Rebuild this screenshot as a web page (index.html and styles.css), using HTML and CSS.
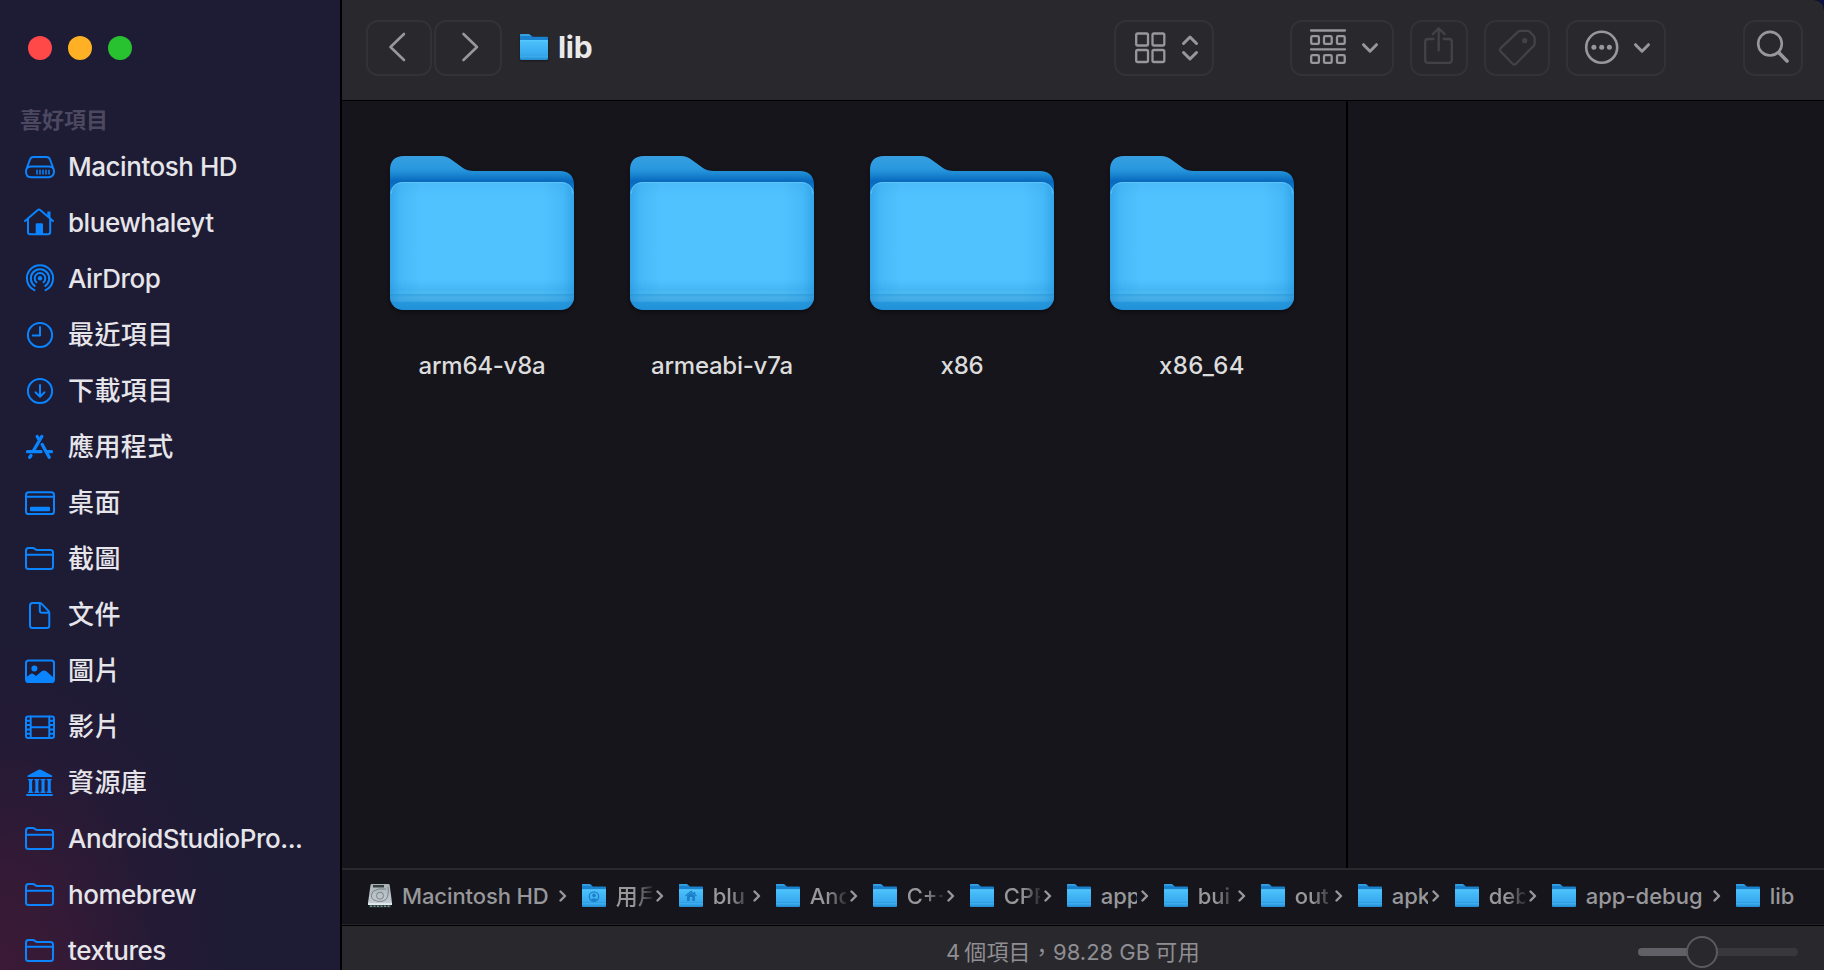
FILE: index.html
```html
<!DOCTYPE html>
<html lang="zh-Hant">
<head>
<meta charset="utf-8">
<title>lib</title>
<link rel="stylesheet" href="styles.css">
</head>
<body>
<svg class="defs" width="0" height="0" aria-hidden="true">
  <defs>
    <linearGradient id="back" x1="0" y1="0" x2="0" y2="1">
      <stop offset="0" stop-color="#369fe2"/><stop offset=".09" stop-color="#2a98dd"/><stop offset=".13" stop-color="#1b87d2"/><stop offset=".18" stop-color="#0869bd"/><stop offset=".3" stop-color="#1a86d0"/>
    </linearGradient>
    <linearGradient id="front" x1="0" y1="0" x2="0" y2="1">
      <stop offset="0" stop-color="#4cbcf9"/><stop offset=".12" stop-color="#50c3ff"/><stop offset=".76" stop-color="#50c3ff"/><stop offset=".84" stop-color="#45b7f5"/><stop offset=".87" stop-color="#4fbaf2"/><stop offset=".88" stop-color="#36a5e1"/><stop offset=".9" stop-color="#48b0e9"/><stop offset=".93" stop-color="#41abe5"/><stop offset=".94" stop-color="#2799dc"/><stop offset="1" stop-color="#2190d8"/>
    </linearGradient>
    <linearGradient id="sides" x1="0" y1="0" x2="1" y2="0">
      <stop offset="0" stop-color="#1787d3" stop-opacity=".5"/><stop offset=".06" stop-color="#1f90dc" stop-opacity=".2"/><stop offset=".17" stop-color="#1f90dc" stop-opacity="0"/><stop offset=".83" stop-color="#1f90dc" stop-opacity="0"/><stop offset=".94" stop-color="#1f90dc" stop-opacity=".2"/><stop offset="1" stop-color="#1787d3" stop-opacity=".5"/>
    </linearGradient>
    <linearGradient id="small-front" x1="0" y1="0" x2="0" y2="1">
      <stop offset="0" stop-color="#58cbff"/><stop offset=".1" stop-color="#49bffa"/><stop offset=".72" stop-color="#38a9ee"/><stop offset=".75" stop-color="#2f9de2"/><stop offset=".8" stop-color="#3eaeee"/><stop offset=".9" stop-color="#2e9ce0"/><stop offset="1" stop-color="#2389d0"/>
    </linearGradient>
    <linearGradient id="metal" x1="0" y1="0" x2="0" y2="1">
      <stop offset="0" stop-color="#a9b2b6"/><stop offset="1" stop-color="#c6d0d4"/>
    </linearGradient>
  </defs>
  <symbol id="big-folder" viewBox="0 0 184 154">
    <path fill="url(#back)" d="M0 14Q0 0 14 0H51Q57 0 62 4L73 12Q77 15 84 15H171Q184 16 184 29V140H0Z"/>
    <rect y="26" width="184" height="128" rx="13" fill="url(#front)"/>
    <rect y="26" width="184" height="128" rx="13" fill="url(#sides)"/>
    <path d="M1 38Q2 26.5 13 26.5H171Q182 26.5 183 38" fill="none" stroke="#69cbfc" stroke-opacity=".7"/>
  </symbol>
  <symbol id="small-folder" viewBox="0 0 24 23">
    <path fill="#1b82ce" d="M0 1Q0 0 1 0H7Q8 0 9 1L11 2.4H23Q24 2.4 24 3.4V10H0Z"/>
    <path fill="#35a0e2" d="M0 1Q0 0 1 0H7Q8 0 9 1L10 1.8H0Z"/>
    <path fill="url(#small-front)" d="M0 5.3H24V22Q24 23 23 23H1Q0 23 0 22Z"/>
  </symbol>
  <symbol id="user-mark" viewBox="0 0 24 23">
    <g fill="none" stroke="#1d7fc9" stroke-width="1.3"><circle cx="12" cy="12.6" r="4.7"/></g>
    <circle cx="12" cy="11.4" r="1.8" fill="#1d7fc9"/><path d="M8.500 15.800Q12 12.500 15.500 15.800Q12 18.500 8.500 15.800" fill="#1d7fc9"/>
  </symbol>
  <symbol id="home-mark" viewBox="0 0 24 23">
    <path d="M6.500 12 12 7.200 17.500 12M15.600 8V11" fill="none" stroke="#1d7fc9" stroke-width="1.2"/>
    <path fill="#1d7fc9" fill-rule="evenodd" d="M8 11.800 12 8.600 16 11.800V17H8ZM10.800 13V17H13.200V13Z"/>
  </symbol>
  <symbol id="chev" viewBox="0 0 8 12"><path d="M1.500 1.500 6 6 1.500 10.500" fill="none" stroke="#98989b" stroke-width="2.4" stroke-linecap="round" stroke-linejoin="round"/></symbol>
  <symbol id="folder" viewBox="0 0 32 32"><path d="M2 24V7.500Q2 5 4.500 5H8.500Q10 5 11 6T13.500 7H26.500Q29 7 29 9.500V23.500Q29 26 26.500 26H4.500Q2 26 2 23.500M2 11.700H29"/></symbol>
</svg>

<div class="window">
  <aside class="sidebar">
    <div class="lights"><i class="red"></i><i class="amber"></i><i class="green"></i></div>
    <h2 class="heading">喜好項目</h2>
    <ul class="places">
      <li><svg viewBox="0 0 32 32"><path d="M2 20.500Q2 15.500 7 15.500H25Q30 15.500 30 20.500T25 26.200H7Q2 26.200 2 20.500M2.300 18.500 6 8.500Q6.900 6 9.500 6H22.500Q25.100 6 26 8.500L29.700 18.500"/><path stroke-width="1.500" d="M13 19.300V23M16 19.300V23M19 19.300V23M22 19.300V23M25 19.300V23"/></svg><span>Macintosh HD</span></li>
      <li><svg viewBox="0 0 32 32"><path d="M1 14 13.800 3Q15 2 16.200 3L29 14M4 12V25Q4 27.200 6.200 27.200H24Q26.200 27.200 26.200 25V12"/><path class="solid" d="M23.300 4.500H26.500V12L23.300 9ZM11.700 17.500Q11.700 16.300 12.900 16.300H17.800Q19 16.300 19 17.500V27H11.700Z"/></svg><span>bluewhaleyt</span></li>
      <li><svg viewBox="0 0 32 32"><path d="M10.400 27.200A13.100 13.100 0 1 1 21.600 27.200M10.700 22.900A9.200 9.200 0 1 1 21.300 22.900M12.400 19.200A5.300 5.300 0 1 1 19.600 19.200"/><circle class="solid" cx="16" cy="15.300" r="2.200"/></svg><span>AirDrop</span></li>
      <li class="zh"><svg viewBox="0 0 32 32"><circle cx="16" cy="16" r="12.100"/><path d="M16 8V16.500H8.800"/></svg><span>最近項目</span></li>
      <li class="zh"><svg viewBox="0 0 32 32"><circle cx="16" cy="16" r="12.100"/><path d="M16 10V21.500M11.500 17.300 16 21.700 20.500 17.300"/></svg><span>下載項目</span></li>
      <li class="zh"><svg viewBox="0 0 32 32"><path stroke-width="3.3" d="M17.800 5.500 9.600 19.500M13.200 5.500 14.500 7.800M18.200 13.500 25.200 26.200M3.500 20.700H17M24 20.700H27.500M7 24.500 5.700 26.300"/></svg><span>應用程式</span></li>
      <li class="zh"><svg viewBox="0 0 32 32"><rect x="2" y="5.300" width="28" height="21.700" rx="2.600"/><path d="M2 9.700H30"/><rect class="solid" x="6" y="19.700" width="20" height="4.500" rx="1"/></svg><span>桌面</span></li>
      <li class="zh"><svg><use href="#folder"/></svg><span>截圖</span></li>
      <li class="zh"><svg viewBox="0 0 32 32"><path d="M8.500 4H15.500Q16.800 4 17.700 4.900L24.500 12Q25.300 12.900 25.300 14.200V26.500Q25.300 29 22.800 29H8.500Q6 29 6 26.500V6.500Q6 4 8.500 4ZM15.800 4.500V11.500Q15.800 13.700 18 13.700H25"/></svg><span>文件</span></li>
      <li class="zh"><svg viewBox="0 0 32 32"><rect x="2" y="5.500" width="28" height="21.500" rx="2.600"/><circle class="solid" cx="10.400" cy="13.400" r="3"/><path class="solid" d="M2 22.500 6.500 19Q8 18 9.500 19L12 21 18 16Q20 14.800 22 16L30 23V25Q30 27 28 27H4Q2 27 2 25Z"/></svg><span>圖片</span></li>
      <li class="zh"><svg viewBox="0 0 32 32"><rect x="2" y="5.500" width="28" height="21.500" rx="2"/><path d="M6.700 5.500V27M25.300 5.500V27M6.700 16.200H25.300M2 9.700H6.700M2 14H6.700M2 18.400H6.700M2 22.700H6.700M25.300 9.700H30M25.300 14H30M25.300 18.400H30M25.300 22.700H30"/></svg><span>影片</span></li>
      <li class="zh"><svg viewBox="0 0 32 32"><path class="solid" d="M14.500 2.800Q15.700 2 17 2.800L28 8.500Q28.800 9.300 28 10H3.800Q3 9.300 3.800 8.500ZM4 12H9V13.300H8.100V24.500H9V26H4V24.500H5V13.300H4ZM10.300 12H15.300V13.300H14.400V24.500H15.300V26H10.300V24.500H11.300V13.300H10.300ZM16.500 12H21.500V13.300H20.600V24.500H21.500V26H16.500V24.500H17.500V13.300H16.500ZM22.700 12H27.700V13.300H26.800V24.500H27.700V26H22.700V24.500H23.700V13.300H22.700Z"/><path d="M3 28H28"/></svg><span>資源庫</span></li>
      <li><svg><use href="#folder"/></svg><span>AndroidStudioPro...</span></li>
      <li><svg><use href="#folder"/></svg><span>homebrew</span></li>
      <li><svg><use href="#folder"/></svg><span>textures</span></li>
    </ul>
  </aside>

  <main class="main">
    <header class="toolbar">
      <button class="btn back"><svg viewBox="0 0 66 56"><path d="M38 14 24.500 27 38 40"/></svg></button>
      <button class="btn forward"><svg viewBox="0 0 68 56"><path d="M29.500 14 43 27 29.500 40"/></svg></button>
      <svg class="title-icon" viewBox="0 0 24 23" preserveAspectRatio="none"><use href="#small-folder"/></svg>
      <h1 class="title">lib</h1>
      <button class="btn view"><svg viewBox="0 0 100 56"><g stroke-width="2.300"><rect x="22.200" y="13.500" width="11.800" height="12" rx="1.500"/><rect x="38.500" y="13.500" width="11.800" height="12" rx="1.500"/><rect x="22.200" y="30" width="11.800" height="12" rx="1.500"/><rect x="38.500" y="30" width="11.800" height="12" rx="1.500"/></g><path stroke-width="3" d="M69.500 23.500 76 17 82.500 23.500M69.500 32.500 76 39 82.500 32.500"/></svg></button>
      <button class="btn group"><svg viewBox="0 0 104 56"><g stroke-width="2.300"><path d="M21 10.500H55M21 29.300H55"/><rect x="21.200" y="16.200" width="7.700" height="7.700" rx="1.200"/><rect x="34" y="16.200" width="7.700" height="7.700" rx="1.200"/><rect x="47" y="16.200" width="7.700" height="7.700" rx="1.200"/><rect x="21.200" y="35.200" width="7.700" height="7.700" rx="1.200"/><rect x="34" y="35.200" width="7.700" height="7.700" rx="1.200"/><rect x="47" y="35.200" width="7.700" height="7.700" rx="1.200"/></g><path stroke-width="3" d="M73.500 24.700 80 31.200 86.500 24.700"/></svg></button>
      <button class="btn share dim"><svg viewBox="0 0 58 56"><path d="M23.500 19H18Q15.200 19 15.200 21.800V40Q15.200 42.800 18 42.800H39Q41.800 42.800 41.800 40V21.800Q41.800 19 39 19H33.700M28.700 30.500V8.500M22.700 14.300 28.700 8.300 34.700 14.300"/></svg></button>
      <button class="btn tag dim"><svg viewBox="0 0 66 56"><path d="M36.500 10.800H43.500Q44.800 10.800 45.700 11.700L49.700 16Q50.600 17 50.600 18.200V23.500Q50.600 24.800 49.700 25.700L32 43.800Q30.300 45.500 28.600 43.800L16.700 31.500Q15.200 29.800 16.700 28.200L34.200 11.700Q35.200 10.800 36.500 10.800Z"/><circle class="solid" cx="40.700" cy="20.700" r="2.600"/></svg></button>
      <button class="btn more"><svg viewBox="0 0 100 56"><circle cx="35.700" cy="27.300" r="15.500"/><g class="solid"><circle cx="27.900" cy="27.300" r="2.500"/><circle cx="35.700" cy="27.300" r="2.500"/><circle cx="43.400" cy="27.300" r="2.500"/></g><path stroke-width="3" d="M69.500 24.700 76 31.200 82.500 24.700"/></svg></button>
      <button class="btn search"><svg viewBox="0 0 60 56"><circle cx="27" cy="23.700" r="11.800"/><path stroke-width="3.600" d="M36 32.800 44 41"/></svg></button>
    </header>

    <section class="content">
      <div class="files">
        <figure><svg><use href="#big-folder"/></svg><figcaption>arm64-v8a</figcaption></figure>
        <figure><svg><use href="#big-folder"/></svg><figcaption>armeabi-v7a</figcaption></figure>
        <figure><svg><use href="#big-folder"/></svg><figcaption>x86</figcaption></figure>
        <figure><svg><use href="#big-folder"/></svg><figcaption class="wide">x86_64</figcaption></figure>
      </div>
      <div class="preview"></div>
    </section>

    <nav class="path">
      <div class="crumb disk"><svg class="ic" viewBox="0 0 24 24"><path d="M2.500 1Q2.700 0 3.700 0H20.500Q21.500 0 21.700 1L24 19V20Q24 21 23 21H1Q0 21 0 20V19Z" fill="url(#metal)"/><path d="M5 1H16V3.500H5Z" fill="#384044"/><path d="M0 19.200H24V21H0Z" fill="#e4ecee"/><path d="M1 21H23V23.500H1Z" fill="#283b3b"/><path d="M2 22.200H22" stroke="#78928f" stroke-width="1.500" stroke-dasharray="2 1.500"/><g fill="none" stroke="#798286"><path d="M18 5Q10 4 5.500 7Q1.500 12 5 15.500Q12 19.500 18 15.500Q21 12 20 3"/><circle cx="12" cy="11.700" r="3.500"/></g></svg><span>Macintosh HD</span><svg class="sep"><use href="#chev"/></svg></div>
      <div class="crumb cut fade"><svg class="ic"><use href="#small-folder"/><use href="#user-mark"/></svg><span>用戶</span><svg class="sep"><use href="#chev"/></svg></div>
      <div class="crumb cut fade"><svg class="ic"><use href="#small-folder"/><use href="#home-mark"/></svg><span>blu</span><svg class="sep"><use href="#chev"/></svg></div>
      <div class="crumb cut fade"><svg class="ic"><use href="#small-folder"/></svg><span>And</span><svg class="sep"><use href="#chev"/></svg></div>
      <div class="crumb cut fade"><svg class="ic"><use href="#small-folder"/></svg><span>C++</span><svg class="sep"><use href="#chev"/></svg></div>
      <div class="crumb cut fade"><svg class="ic"><use href="#small-folder"/></svg><span>CPP</span><svg class="sep"><use href="#chev"/></svg></div>
      <div class="crumb cut"><svg class="ic"><use href="#small-folder"/></svg><span>app</span><svg class="sep"><use href="#chev"/></svg></div>
      <div class="crumb cut fade"><svg class="ic"><use href="#small-folder"/></svg><span>bui</span><svg class="sep"><use href="#chev"/></svg></div>
      <div class="crumb cut fade"><svg class="ic"><use href="#small-folder"/></svg><span>out</span><svg class="sep"><use href="#chev"/></svg></div>
      <div class="crumb cut"><svg class="ic"><use href="#small-folder"/></svg><span>apk</span><svg class="sep"><use href="#chev"/></svg></div>
      <div class="crumb cut fade"><svg class="ic"><use href="#small-folder"/></svg><span>deb</span><svg class="sep"><use href="#chev"/></svg></div>
      <div class="crumb parent"><svg class="ic"><use href="#small-folder"/></svg><span>app-debug</span><svg class="sep"><use href="#chev"/></svg></div>
      <div class="crumb"><svg class="ic"><use href="#small-folder"/></svg><span>lib</span></div>
    </nav>

    <footer class="status">
      <p>4<span class="cjk">個項目，</span>98.28 GB<span class="end">可用</span></p>
      <div class="slider"><div class="filled"></div><div class="knob"></div></div>
    </footer>
  </main>
</div>
</body>
</html>
```

FILE: styles.css
```css
* { box-sizing: border-box; margin: 0; padding: 0; }

body {
  width: 1824px;
  height: 970px;
  overflow: hidden;
  background: #0b1145;
  font-family: Inter, "Noto Sans CJK TC", sans-serif;
}

.defs { position: absolute; }

.window {
  display: flex;
  width: 1824px;
  height: 970px;
  overflow: hidden;
  border-top-right-radius: 10px;
  background: #000;
}

/* Sidebar */
.sidebar {
  width: 342px;
  flex: none;
  border-right: 2px solid #000;
  background:
    radial-gradient(ellipse 235px 330px at 0 100%, #3b1a36 0%, #341a36 30%, rgba(40, 26, 54, .6) 68%, rgba(30, 27, 53, 0) 100%),
    #1e1b35;
}

.lights { display: flex; gap: 16px; padding: 36px 0 0 28px; }
.lights i { width: 24px; height: 24px; border-radius: 50%; }
.red { background: #ff4848; }
.amber { background: #ffb024; }
.green { background: #28c231; }

.heading {
  height: 79px;
  padding: 44px 0 0 20px;
  font-size: 22px;
  line-height: 32px;
  font-weight: 700;
  color: #4b4860;
}

.places { list-style: none; }
.places li {
  display: flex;
  align-items: center;
  gap: 12px;
  height: 56px;
  padding-left: 24px;
  font-size: 26px;
  line-height: 56px;
  font-weight: 500;
  letter-spacing: -.46px;
  color: #e6e5ea;
  white-space: nowrap;
}
.places .zh { letter-spacing: .4px; }
.places svg {
  width: 32px;
  height: 32px;
  flex: none;
  fill: none;
  stroke: #0a84ff;
  stroke-width: 2;
  stroke-linecap: round;
  stroke-linejoin: round;
}
.places .solid { fill: #0a84ff; stroke: none; }

/* Toolbar */
.main { display: flex; flex-direction: column; width: 1482px; height: 970px; }

.toolbar {
  display: flex;
  align-items: flex-start;
  flex: none;
  height: 101px;
  padding: 20px 21px 0 24px;
  border-bottom: 1px solid #000;
  background: #29282d;
}

.btn {
  height: 56px;
  flex: none;
  border: 0;
  border-radius: 12px;
  background: none;
  box-shadow: inset 0 0 0 2px #333237;
}
.btn svg {
  display: block;
  width: 100%;
  height: 56px;
  fill: none;
  stroke: #98979c;
  stroke-width: 2.6;
  stroke-linecap: round;
  stroke-linejoin: round;
}
.btn .solid { fill: #98979c; stroke: none; }
.dim svg { stroke: #434247; stroke-width: 2.3; }
.dim .solid { fill: #434247; }

.back { width: 66px; margin-right: 2px; }
.forward { width: 68px; margin-right: 18px; }
.title-icon { width: 28px; height: 26px; margin-top: 14px; filter: drop-shadow(0 1px 1px rgba(0, 0, 0, .4)); }
.title { margin-left: 10px; font-size: 30px; line-height: 55px; font-weight: 700; color: #e9e9ea; letter-spacing: -.3px; }
.view { width: 100px; margin-left: auto; margin-right: 76px; }
.group { width: 104px; margin-right: 16px; }
.share { width: 58px; margin-right: 16px; }
.tag { width: 66px; margin-right: 16px; }
.more { width: 100px; margin-right: 77px; }
.search { width: 60px; }

/* File area */
.content { display: flex; flex: none; height: 767px; background: #16151b; }
.files { display: flex; width: 1006px; padding: 55px 0 0 20px; border-right: 2px solid #000; }
.files figure { display: flex; flex-direction: column; align-items: center; width: 240px; flex: none; }
.files svg { width: 184px; height: 154px; filter: drop-shadow(0 2px 2px rgba(0, 0, 0, .45)); }
.files figcaption { margin-top: 41px; font-size: 24px; line-height: 30px; font-weight: 500; letter-spacing: -.25px; color: #dcdcdd; }
.files .wide { letter-spacing: .4px; }
.preview { flex: 1; }

/* Path bar */
.path {
  display: flex;
  align-items: center;
  flex: none;
  height: 58px;
  padding: 0 0 4px 26px;
  border-top: 2px solid #2a292e;
  border-bottom: 1px solid #000;
  background: #16151b;
  box-shadow: inset 0 -1px #242328;
  color: #98989b;
  font-size: 22px;
  line-height: 40px;
  font-weight: 500;
}
.crumb { display: flex; align-items: center; flex: none; white-space: nowrap; }
.ic { width: 24px; height: 23px; flex: none; margin-right: 10px; }
.sep { width: 8px; height: 12px; flex: none; }
.disk { width: 213.7px; }
.disk .ic { height: 24px; }
.disk span { width: 157px; letter-spacing: -.1px; }
.cut { width: 97px; }
.cut span { width: 36px; margin-right: 4px; overflow: hidden; }
.fade span { -webkit-mask-image: linear-gradient(90deg, #000 50%, transparent 110%); mask-image: linear-gradient(90deg, #000 50%, transparent 110%); }
.parent { width: 184px; }
.parent span { width: 127px; }

/* Status bar */
.status { position: relative; flex: 1; min-height: 0; background: #29282d; }
.status p {
  padding-left: 604px;
  font-size: 22px;
  line-height: 52px;
  color: #8f8e93;
  white-space: nowrap;
}
.cjk { margin-left: 4px; letter-spacing: .2px; }
.end { margin-left: 5px; letter-spacing: .5px; }
.slider {
  position: absolute;
  left: 1296px;
  top: 22px;
  width: 160px;
  height: 8px;
  border-radius: 4px;
  background: #38373c;
}
.filled { width: 64px; height: 8px; border-radius: 4px; background: #616066; }
.knob {
  position: absolute;
  left: 48px;
  top: -12px;
  width: 32px;
  height: 32px;
  border: 2px solid #5b5a5f;
  border-radius: 50%;
  background: #29282d;
}
```
